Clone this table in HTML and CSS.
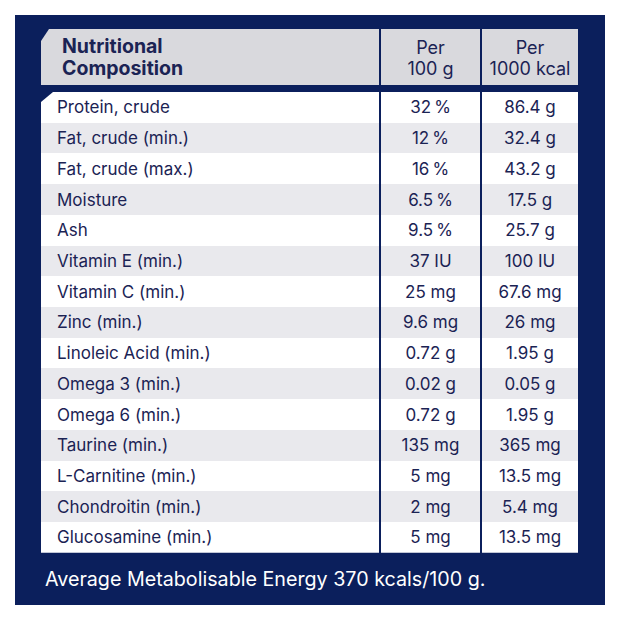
FILE: index.html
```html
<!DOCTYPE html>
<html>
<head>
<meta charset="utf-8">
<link rel="stylesheet" href="styles.css">
</head>
<body>
<div class="panel">
  <div class="head">
    <div class="hcell hname">Nutritional<br>Composition</div>
    <div class="hcell hval">Per<br>100 g</div>
    <div class="hcell hval">Per<br>1000 kcal</div>
  </div>
  <div class="rows">
    <div class="row"><div class="c name">Protein, crude</div><div class="c">32&#8239;%</div><div class="c">86.4 g</div></div>
    <div class="row alt"><div class="c name">Fat, crude (min.)</div><div class="c">12&#8239;%</div><div class="c">32.4 g</div></div>
    <div class="row"><div class="c name">Fat, crude (max.)</div><div class="c">16&#8239;%</div><div class="c">43.2 g</div></div>
    <div class="row alt"><div class="c name">Moisture</div><div class="c">6.5&#8239;%</div><div class="c">17.5 g</div></div>
    <div class="row"><div class="c name">Ash</div><div class="c">9.5&#8239;%</div><div class="c">25.7 g</div></div>
    <div class="row alt"><div class="c name">Vitamin E (min.)</div><div class="c">37 IU</div><div class="c">100 IU</div></div>
    <div class="row"><div class="c name">Vitamin C (min.)</div><div class="c">25 mg</div><div class="c">67.6 mg</div></div>
    <div class="row alt"><div class="c name">Zinc (min.)</div><div class="c">9.6 mg</div><div class="c">26 mg</div></div>
    <div class="row"><div class="c name">Linoleic Acid (min.)</div><div class="c">0.72 g</div><div class="c">1.95 g</div></div>
    <div class="row alt"><div class="c name">Omega 3 (min.)</div><div class="c">0.02 g</div><div class="c">0.05 g</div></div>
    <div class="row"><div class="c name">Omega 6 (min.)</div><div class="c">0.72 g</div><div class="c">1.95 g</div></div>
    <div class="row alt"><div class="c name">Taurine (min.)</div><div class="c">135 mg</div><div class="c">365 mg</div></div>
    <div class="row"><div class="c name">L-Carnitine (min.)</div><div class="c">5 mg</div><div class="c">13.5 mg</div></div>
    <div class="row alt"><div class="c name">Chondroitin (min.)</div><div class="c">2 mg</div><div class="c">5.4 mg</div></div>
    <div class="row"><div class="c name">Glucosamine (min.)</div><div class="c">5 mg</div><div class="c">13.5 mg</div></div>
  </div>
  <div class="foot">Average Metabolisable Energy 370 kcals/100 g.</div>
</div>
</body>
</html>
```

FILE: styles.css
```css
html, body {
  margin: 0;
  padding: 0;
  background: #ffffff;
}
body {
  font-family: Inter, "Open Sans", sans-serif;
  color: #1b2354;
}
.panel {
  margin: 15px;
  width: 590px;
  height: 590px;
  box-sizing: border-box;
  background: #0b1f5c;
  padding: 14px 27px 0 26px;
  display: flex;
  flex-direction: column;
}
.head {
  display: grid;
  grid-template-columns: 338px 99px 96px;
  column-gap: 2px;
  height: 56px;
}
.hcell {
  background: #d9d9dd;
  display: flex;
  flex-direction: column;
  justify-content: center;
  line-height: 22px;
}
.hname {
  font-weight: 700;
  font-size: 19.5px;
  padding-left: 21px;
  clip-path: polygon(8px 0, 100% 0, 100% 100%, 0 100%, 0 12px);
}
.hval {
  text-align: center;
  font-size: 18px;
  line-height: 21px;
  padding-top: 1px;
}
.rows {
  margin-top: 7px;
  display: flex;
  flex-direction: column;
  clip-path: polygon(12px 0, 100% 0, 100% 100%, 0 100%, 0 10px);
}
.row {
  display: grid;
  grid-template-columns: 338px 99px 96px;
  column-gap: 2px;
  height: 30.73px;
}
.c {
  background: #ffffff;
  display: flex;
  align-items: center;
  justify-content: center;
  font-size: 17px;
}
.alt .c {
  background: #e9e9ed;
}
.c.name {
  justify-content: flex-start;
  padding-left: 16px;
}
.foot {
  color: #ffffff;
  font-size: 19.7px;
  padding-left: 4px;
  margin-top: 14px;
}
```
